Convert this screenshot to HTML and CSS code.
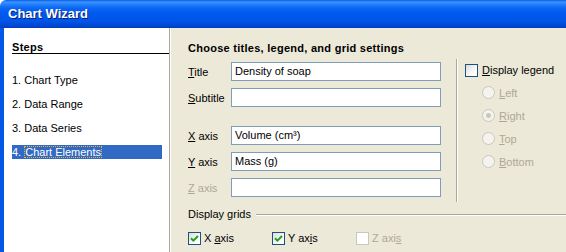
FILE: index.html
```html
<!DOCTYPE html>
<html lang="en">
<head>
    <meta charset="UTF-8">
    <title>Chart Wizard</title>
    <link rel="stylesheet" href="styles.css">
</head>
<body>
    <div class="window">
        <div class="titlebar">Chart Wizard</div>
        <div class="frame">
            <aside class="steps">
                <div class="steps-head">Steps</div>
                <ul class="step-list">
                    <li>1. Chart Type</li>
                    <li>2. Data Range</li>
                    <li>3. Data Series</li>
                    <li class="current">4. <span class="focus">Chart Elements</span></li>
                </ul>
            </aside>

            <main class="page">
                <h1>Choose titles, legend, and grid settings</h1>
                <div class="top">
                    <div class="fields">
                        <div class="field">
                            <label><u>T</u>itle</label>
                            <div class="textbox">Density of soap</div>
                        </div>
                        <div class="field">
                            <label><u>S</u>ubtitle</label>
                            <div class="textbox"></div>
                        </div>
                        <div class="field spaced">
                            <label><u>X</u> axis</label>
                            <div class="textbox">Volume (cm³)</div>
                        </div>
                        <div class="field">
                            <label><u>Y</u> axis</label>
                            <div class="textbox">Mass (g)</div>
                        </div>
                        <div class="field disabled">
                            <label><u>Z</u> axis</label>
                            <div class="textbox"></div>
                        </div>
                    </div>

                    <div class="legend">
                        <div class="check">
                            <span class="box"></span>
                            <span><u>D</u>isplay legend</span>
                        </div>
                        <ul class="radios">
                            <li><span class="radio"></span><span><u>L</u>eft</span></li>
                            <li><span class="radio on"></span><span><u>R</u>ight</span></li>
                            <li><span class="radio"></span><span><u>T</u>op</span></li>
                            <li><span class="radio"></span><span><u>B</u>ottom</span></li>
                        </ul>
                    </div>
                </div>

                <div class="group-head">
                    <span>Display grids</span>
                    <span class="rule"></span>
                </div>
                <div class="grid-checks">
                    <div class="check">
                        <span class="box checked">
                            <svg width="9" height="9" viewBox="0 0 9 9"><path d="M1 4.2 L3.4 6.6 L8 2" fill="none" stroke="#21a121" stroke-width="2"/></svg>
                        </span>
                        <span>X <u>a</u>xis</span>
                    </div>
                    <div class="check">
                        <span class="box checked">
                            <svg width="9" height="9" viewBox="0 0 9 9"><path d="M1 4.2 L3.4 6.6 L8 2" fill="none" stroke="#21a121" stroke-width="2"/></svg>
                        </span>
                        <span>Y ax<u>i</u>s</span>
                    </div>
                    <div class="check disabled">
                        <span class="box"></span>
                        <span>Z axi<u>s</u></span>
                    </div>
                </div>
            </main>
        </div>
    </div>
</body>
</html>
```

FILE: styles.css
```css
html, body {
    margin: 0;
    padding: 0;
    width: 566px;
    height: 252px;
    overflow: hidden;
    font-family: "Liberation Sans", Arial, sans-serif;
    font-size: 11px;
    color: #000;
}
.window {
    display: flex;
    flex-direction: column;
    height: 252px;
}
.titlebar {
    height: 28px;
    box-sizing: border-box;
    padding: 6px 0 0 8px;
    background: linear-gradient(#0a5be6 0, #3d95ff 2px, #2583fb 4px, #0a66f5 8px, #0058ee 14px, #0055e8 21px, #0049d6 25px, #003dc0 28px);
    border-top-left-radius: 6px;
    color: #fff;
    font-weight: bold;
    font-size: 13px;
    line-height: 16px;
    text-shadow: 1px 1px 0 #0a1e72;
}
.frame {
    flex: 1;
    display: flex;
    border-left: 4px solid #0558e5;
    box-shadow: inset 1px 0 0 #0831d9;
}
.steps {
    width: 166px;
    box-sizing: border-box;
    background: #fff;
    padding: 13px 0 0 8px;
    border-right: 1px solid #aca899;
}
.steps-head {
    font-weight: bold;
    letter-spacing: 0.3px;
    line-height: 12px;
    border-bottom: 1px solid #000;
}
.step-list {
    list-style: none;
    margin: 19px 7px 0 0;
    padding: 0;
    display: flex;
    flex-direction: column;
    gap: 10px;
}
.step-list li {
    height: 14px;
    line-height: 14px;
}
.step-list li.current {
    background: #316ac5;
    color: #fff;
}
.focus {
    outline: 1px dotted #f0b040;
    outline-offset: -1px;
    padding: 0 1px;
}
.page {
    flex: 1;
    background: #ece9d8;
    border-left: 1px solid #fff;
    padding: 13px 0 0 17px;
}
h1 {
    margin: 0 0 4px;
    font-size: 11px;
    line-height: 14px;
    font-weight: bold;
    letter-spacing: 0.27px;
}
.top {
    display: flex;
    height: 143px;
}
.fields {
    width: 268px;
    padding-top: 3px;
    display: flex;
    flex-direction: column;
    gap: 7px;
}
.field {
    display: flex;
    align-items: center;
}
.field.spaced {
    margin-top: 12px;
}
.field label {
    width: 43px;
}
.textbox {
    width: 210px;
    height: 19px;
    box-sizing: border-box;
    border: 1px solid #7f9db9;
    background: #fff;
    padding: 0 3px;
    line-height: 17px;
}
.field.disabled label {
    color: #aca899;
}
.legend {
    border-left: 1px solid #aca899;
    box-shadow: inset 1px 0 0 #fff;
    padding: 4px 0 0 8px;
}
.check {
    display: flex;
    align-items: center;
    gap: 4px;
    line-height: 14px;
}
.box {
    width: 13px;
    height: 13px;
    box-sizing: border-box;
    border: 1px solid #1c5180;
    background: linear-gradient(135deg, #dcdcd7 0, #fff 75%);
    display: flex;
    align-items: center;
    justify-content: center;
}
.check.disabled {
    color: #aca899;
}
.check.disabled .box {
    border-color: #cac8bb;
    background: #fff;
}
.radios {
    list-style: none;
    margin: 9px 0 0 17px;
    padding: 0;
    display: flex;
    flex-direction: column;
    gap: 10px;
    color: #aca899;
}
.radios li {
    display: flex;
    align-items: center;
    gap: 4px;
    height: 13px;
}
.radio {
    width: 13px;
    height: 13px;
    box-sizing: border-box;
    border: 1px solid #cac8bb;
    border-radius: 50%;
    background: #f4f3ee;
    display: flex;
    align-items: center;
    justify-content: center;
}
.radio.on::after {
    content: "";
    width: 5px;
    height: 5px;
    border-radius: 50%;
    background: #cac8bb;
}
.group-head {
    display: flex;
    align-items: center;
    gap: 5px;
    margin-top: 5px;
    line-height: 14px;
}
.rule {
    flex: 1;
    height: 1px;
    background: #aca899;
    box-shadow: 0 1px 0 #fff;
}
.grid-checks {
    display: flex;
    margin-top: 10px;
}
.grid-checks .check {
    width: 84px;
    gap: 3px;
}
```
